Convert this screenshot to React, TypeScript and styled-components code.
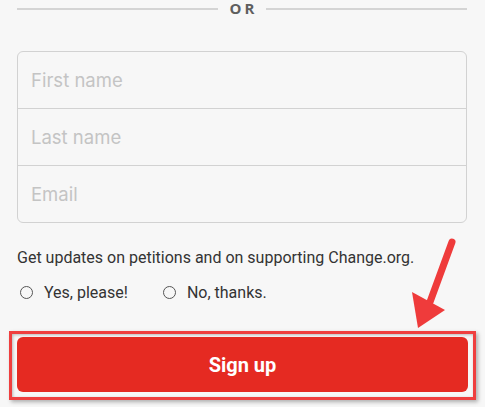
import styled, { createGlobalStyle } from "styled-components";

const GlobalStyle = createGlobalStyle`
  html, body {
    margin: 0;
    padding: 0;
    background: #f7f7f7;
  }
  body {
    font-family: Roboto, "Liberation Sans", sans-serif;
  }
`;

const Page = styled.div`
  position: relative;
  width: 485px;
  height: 407px;
  overflow: hidden;
  background: #f7f7f7;
  padding: 0 18px 0 17px;
  box-sizing: border-box;
`;

const Divider = styled.div`
  display: flex;
  align-items: center;
  gap: 12px;
  height: 17px;
`;

const DividerLine = styled.span`
  flex: 1;
  height: 2px;
  background: #d4d4d4;
`;

const DividerText = styled.span`
  font-family: "Open Sans", Roboto, sans-serif;
  font-size: 15px;
  font-weight: 700;
  letter-spacing: 3px;
  color: #5f5f5f;
  line-height: 17px;
  margin-right: -3px;
`;

const FieldGroup = styled.div`
  margin-top: 34px;
  border: 1px solid #d2d2d2;
  border-radius: 6px;
  display: flex;
  flex-direction: column;
`;

const Field = styled.div<{ $last?: boolean }>`
  height: 56px;
  display: flex;
  align-items: center;
  padding-left: 13px;
  border-bottom: ${(p) => (p.$last ? "none" : "1px solid #d2d2d2")};
  font-family: Inter, Roboto, sans-serif;
  font-size: 18.5px;
  color: #c4c4c4;
`;

const Note = styled.p`
  margin: 26px 0 0;
  font-size: 16px;
  line-height: 18px;
  color: #333;
`;

const RadioRow = styled.div`
  display: flex;
  align-items: center;
  gap: 35px;
  margin-top: 16px;
  padding-left: 3px;
`;

const RadioOption = styled.label`
  display: flex;
  align-items: center;
  gap: 11px;
  font-size: 16px;
  color: #333;
`;

const RadioCircle = styled.span`
  width: 11px;
  height: 11px;
  border: 1.5px solid #555;
  border-radius: 50%;
  display: inline-block;
`;

const Highlight = styled.div`
  margin: 29px -9px 0 -8px;
  border: 3px solid #ef3f3f;
  padding: 3px 5px 5px;
  box-shadow: 2px 2px 4px rgba(0, 0, 0, 0.3), inset 1px 1px 3px rgba(0, 0, 0, 0.25);
`;

const SignUpButton = styled.button`
  display: block;
  width: 100%;
  height: 55px;
  border: none;
  border-radius: 6px;
  background: #e52a22;
  color: #fff;
  font-family: Roboto, sans-serif;
  font-size: 20px;
  font-weight: 700;
  cursor: pointer;
`;

const ArrowOverlay = styled.svg`
  position: absolute;
  left: 405px;
  top: 232px;
  width: 60px;
  height: 102px;
  pointer-events: none;
`;

export default function App() {
  return (
    <>
      <GlobalStyle />
      <Page>
        <Divider>
          <DividerLine />
          <DividerText>OR</DividerText>
          <DividerLine />
        </Divider>
        <FieldGroup>
          <Field>First name</Field>
          <Field>Last name</Field>
          <Field $last>Email</Field>
        </FieldGroup>
        <Note>Get updates on petitions and on supporting Change.org.</Note>
        <RadioRow>
          <RadioOption>
            <RadioCircle />
            Yes, please!
          </RadioOption>
          <RadioOption>
            <RadioCircle />
            No, thanks.
          </RadioOption>
        </RadioRow>
        <Highlight>
          <SignUpButton>Sign up</SignUpButton>
        </Highlight>
        <ArrowOverlay viewBox="0 0 60 102">
          <line x1="47" y1="10" x2="25" y2="70" stroke="#ef3b3b" strokeWidth="7" strokeLinecap="round" />
          <polygon points="13,96 7,60 40,78" fill="#ef3b3b" />
        </ArrowOverlay>
      </Page>
    </>
  );
}
